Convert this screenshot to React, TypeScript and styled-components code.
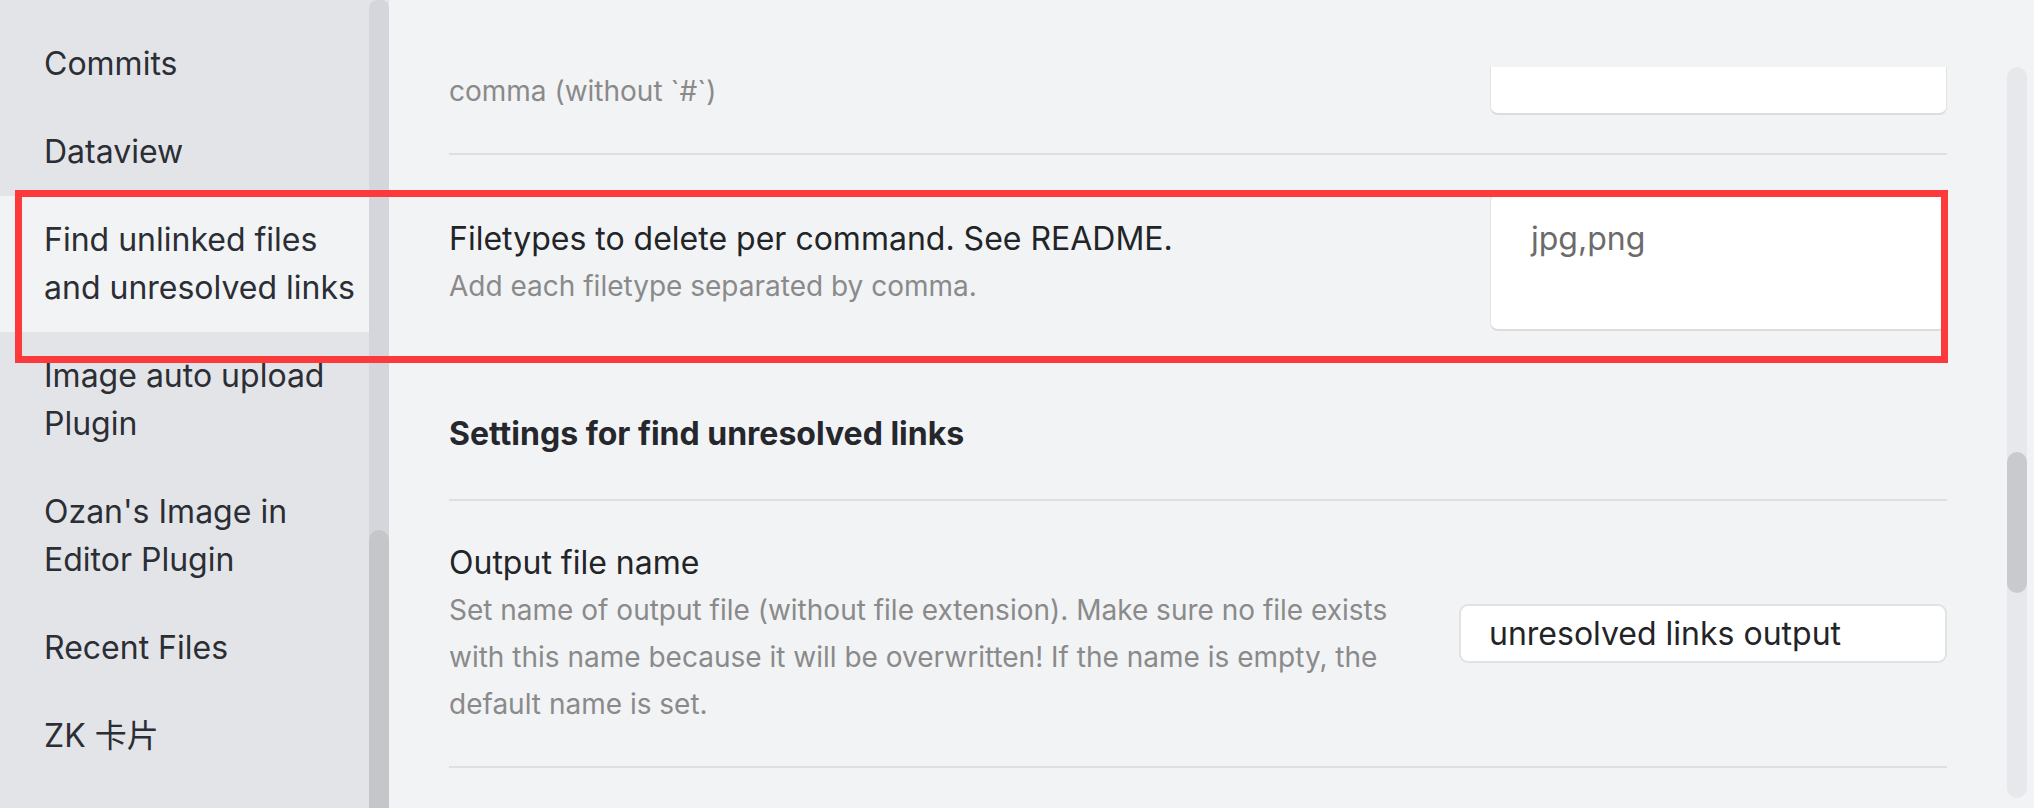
import React from "react";
import styled, { createGlobalStyle } from "styled-components";

const Global = createGlobalStyle`
  html, body { margin: 0; padding: 0; }
  body {
    width: 2034px;
    height: 808px;
    overflow: hidden;
    background: #f2f3f5;
    font-family: Inter, "Noto Sans", "Noto Sans CJK SC", sans-serif;
    -webkit-font-smoothing: antialiased;
  }
  * { box-sizing: border-box; }
`;

const Frame = styled.div`
  position: relative;
  display: flex;
  width: 2034px;
  height: 808px;
  overflow: hidden;
`;

const Sidebar = styled.aside`
  display: flex;
  flex-shrink: 0;
  width: 389px;
  height: 100%;
  background: #e3e4e8;
`;

const NavList = styled.nav`
  display: flex;
  flex-direction: column;
  width: 369px;
  padding-top: 20px;
`;

const NavItem = styled.div<{ $active?: boolean }>`
  padding: 20px 14px 20px 44px;
  font-size: 32px;
  line-height: 48px;
  color: #2b2e34;
  background: ${(p) => (p.$active ? "#f2f3f5" : "transparent")};
`;

const SideTrack = styled.div`
  display: flex;
  flex-direction: column;
  width: 20px;
  height: 100%;
  background: #d5d6db;
  border-radius: 8px 8px 0 0;
`;

const SideThumb = styled.div`
  flex: 1;
  margin-top: 530px;
  background: #c5c6ca;
  border-radius: 10px 10px 0 0;
`;

const Main = styled.main`
  display: flex;
  flex-direction: column;
  flex: 1;
  min-width: 0;
  background: #f2f3f5;
`;

const Header = styled.div`
  height: 67px;
  flex-shrink: 0;
`;

const Body = styled.div`
  display: flex;
  flex: 1;
  min-height: 0;
`;

const Viewport = styled.div`
  flex: 1;
  min-width: 0;
  overflow: hidden;
  padding: 0 60px;
`;

const Content = styled.div<{ $offset: number }>`
  margin-top: ${(p) => -p.$offset}px;
`;

const Item = styled.div<{ $first?: boolean; $last?: boolean; $alignEnd?: boolean }>`
  display: flex;
  align-items: ${(p) => (p.$alignEnd ? "flex-end" : "center")};
  gap: 60px;
  padding: 38px 0;
  border-top: ${(p) => (p.$first ? "none" : "2px solid #dedfe1")};
  border-bottom: ${(p) => (p.$last ? "2px solid #dedfe1" : "none")};
`;

const HeadingItem = styled.div`
  padding: 41px 0;
`;

const Heading = styled.div`
  font-size: 32px;
  line-height: 48px;
  font-weight: 700;
  color: #25272c;
`;

const Info = styled.div`
  flex: 1;
  min-width: 0;
`;

const Name = styled.div`
  font-size: 32px;
  line-height: 48px;
  color: #222428;
`;

const Desc = styled.div`
  font-size: 28px;
  line-height: 47px;
  color: #8a8a8a;
`;

const Control = styled.div`
  display: flex;
  justify-content: flex-end;
  flex-shrink: 0;
`;

const TextArea = styled.textarea`
  display: block;
  width: 457px;
  height: 138px;
  padding: 22px 40px;
  resize: none;
  background: #ffffff;
  border: 1px solid #e2e3e5;
  border-bottom: 2px solid #dcdcde;
  border-radius: 8px;
  font-family: inherit;
  font-size: 32px;
  line-height: 45px;
  color: #6b6b6b;
  outline: none;
`;

const TextInput = styled.input`
  display: block;
  width: 488px;
  height: 59px;
  padding: 0 28px;
  background: #ffffff;
  border: 2px solid #e1e2e4;
  border-radius: 9px;
  font-family: inherit;
  font-size: 32px;
  color: #222428;
  outline: none;
`;

const RightTrack = styled.div`
  display: flex;
  flex-direction: column;
  width: 20px;
  margin: 0 7px 10px 0;
  background: #e7e8eb;
  border-radius: 10px;
`;

const RightThumb = styled.div`
  height: 141px;
  margin-top: 385px;
  background: #c9cacd;
  border-radius: 10px;
`;

const Highlight = styled.div`
  position: absolute;
  left: 15px;
  top: 190px;
  width: 1933px;
  height: 173px;
  border: 7px solid #fc3a3c;
  pointer-events: none;
`;

const navItems = [
  "Commits",
  "Dataview",
  "Find unlinked files and unresolved links",
  "Image auto upload Plugin",
  "Ozan's Image in Editor Plugin",
  "Recent Files",
  "ZK 卡片",
];

export default function App() {
  return (
    <>
      <Global />
      <Frame>
        <Sidebar>
          <NavList>
            {navItems.map((t) => (
              <NavItem key={t} $active={t.startsWith("Find")}>
                {t}
              </NavItem>
            ))}
          </NavList>
          <SideTrack>
            <SideThumb />
          </SideTrack>
        </Sidebar>
        <Main>
          <Header />
          <Body>
            <Viewport>
              <Content $offset={128}>
                <Item $first $alignEnd>
                  <Info>
                    <Desc>comma (without `#`)</Desc>
                  </Info>
                  <Control>
                    <TextArea readOnly value="" />
                  </Control>
                </Item>
                <Item>
                  <Info>
                    <Name>Filetypes to delete per command. See README.</Name>
                    <Desc>Add each filetype separated by comma.</Desc>
                  </Info>
                  <Control>
                    <TextArea readOnly value="jpg,png" />
                  </Control>
                </Item>
                <HeadingItem>
                  <Heading>Settings for find unresolved links</Heading>
                </HeadingItem>
                <Item $last>
                  <Info>
                    <Name>Output file name</Name>
                    <Desc>
                      Set name of output file (without file extension). Make sure no file exists
                      with this name because it will be overwritten! If the name is empty, the
                      default name is set.
                    </Desc>
                  </Info>
                  <Control>
                    <TextInput readOnly value="unresolved links output" />
                  </Control>
                </Item>
              </Content>
            </Viewport>
            <RightTrack>
              <RightThumb />
            </RightTrack>
          </Body>
        </Main>
        <Highlight />
      </Frame>
    </>
  );
}
